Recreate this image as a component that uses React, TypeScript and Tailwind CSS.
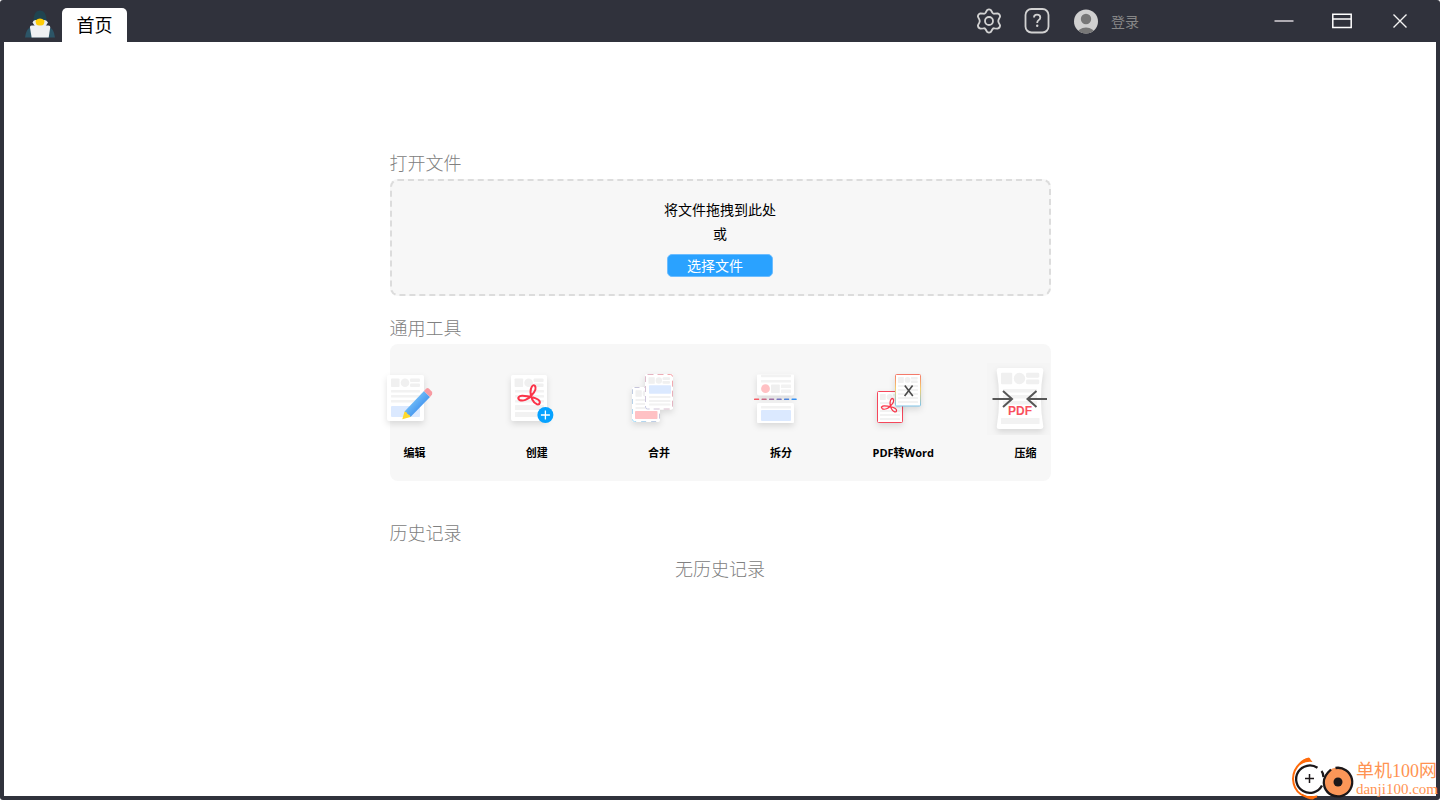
import type { ReactNode } from 'react';

function Acrobat({ transform, width = 2 }: { transform: string; width?: number }) {
  return (
    <path
      transform={transform}
      d="M5.800 -10.300 C8 -7.500 5 -3 2 0 C-1 3.500 -6 5.500 -9.500 4 C-12 2 -10 -0.500 -6.500 -0.300 C-1 0 5 1 9 3.500 C12 5.500 11 9 8 8.300 C4 7 1.500 1 1.500 -4 C1.500 -8 3.500 -12 5.800 -10.300 Z"
      fill="none"
      stroke="#fb3449"
      strokeWidth={width}
      strokeLinejoin="round"
    />
  );
}

// Grey placeholder blocks at the top of every sheet
function SheetHead({ x, y, scale = 1 }: { x: number; y: number; scale?: number }) {
  return (
    <g transform={`translate(${x} ${y}) scale(${scale})`} fill="#f0f0f0">
      <rect width="8.500" height="8.700" rx="0.800" />
      <circle cx="14" cy="4.300" r="4.300" />
      <rect x="19" width="10" height="3.700" rx="1" />
      <rect x="19" y="5" width="10" height="3.700" rx="1" />
    </g>
  );
}

function Lines({ x, width, ys, height = 2.5 }: { x: number; width: number; ys: number[]; height?: number }) {
  return (
    <>
      {ys.map((y) => (
        <rect key={y} x={x} y={y} width={width} height={height} rx="0.600" fill="#f2f2f2" />
      ))}
    </>
  );
}

function ToolIcon({ children }: { children: ReactNode }) {
  return (
    <svg viewBox="0 0 72 72" className="mr-2.5 size-[72px]" aria-hidden="true">
      {children}
    </svg>
  );
}

function EditIcon() {
  return (
    <ToolIcon>
      <defs>
        <linearGradient id="pencil" x1="0" y1="0" x2="1" y2="1">
          <stop offset="0.200" stopColor="#83ccfb" />
          <stop offset="0.800" stopColor="#3286ec" />
        </linearGradient>
      </defs>
      <rect x="13" y="12" width="37" height="46" rx="2" fill="#fff" className="drop-shadow-md" />
      <SheetHead x={17} y={15.4} />
      <Lines x={17} width={29} ys={[27, 32, 37]} />
      <rect x="17" y="43" width="29" height="11" rx="1" fill="#dbe9ff" />
      <path d="M30.500 48.500 L50 28 L56 34 L36.500 54 Z" fill="url(#pencil)" />
      <path d="M50 28 L52.300 25.500 Q53.500 24.500 54.800 25.500 L58 28.800 Q58.500 30 58 31.500 L56 34 Z" fill="#f79aa2" />
      <path d="M30.500 48.500 L28.300 56.200 L36.500 54 Q36 51.500 33.600 51.300 Q33 48.800 30.500 48.500 Z" fill="#ffd92e" />
    </ToolIcon>
  );
}

function CreateIcon() {
  return (
    <ToolIcon>
      <rect x="15" y="12" width="36" height="46" rx="2" fill="#fff" className="drop-shadow-md" />
      <SheetHead x={18.6} y={15.4} />
      <Lines x={19} width={29} ys={[27, 32, 37]} />
      <Lines x={19} width={29} ys={[42, 49]} height={5} />
      <Acrobat transform="translate(33 33)" />
      <circle cx="49.400" cy="52" r="8" fill="#06a2ff" />
      <path d="M49.400 47.500v9M44.900 52h9" stroke="#fff" strokeWidth="1.300" />
    </ToolIcon>
  );
}

function MergeIcon() {
  return (
    <ToolIcon>
      <defs>
        <linearGradient id="mergeBack" x1="0" y1="1" x2="1" y2="0">
          <stop offset="0" stopColor="#93d6f7" />
          <stop offset="1" stopColor="#d3a0b5" />
        </linearGradient>
        <linearGradient id="mergeFront" x1="0" y1="1" x2="1" y2="0">
          <stop offset="0" stopColor="#b9bedd" />
          <stop offset="1" stopColor="#f58e94" />
        </linearGradient>
      </defs>
      <g className="drop-shadow-md">
        <rect x="14" y="24" width="28" height="35" rx="2" fill="#fff" />
        <rect x="27" y="11" width="28" height="35.500" rx="2" fill="#fff" />
      </g>
      <rect x="14.500" y="24.500" width="27" height="34" rx="2" fill="none" stroke="url(#mergeBack)" strokeOpacity="0.800" strokeDasharray="5 5" />
      <SheetHead x={17.5} y={27.3} scale={0.74} />
      <Lines x={17.5} width={21} ys={[36, 40, 44]} height={2} />
      <rect x="17" y="48" width="22.500" height="8" rx="0.800" fill="#ffc1c4" />
      <rect x="27" y="11" width="28" height="35.500" rx="2" fill="#fff" />
      <rect x="27.500" y="11.500" width="27" height="34.500" rx="2" fill="none" stroke="url(#mergeFront)" strokeOpacity="0.800" strokeDasharray="6 4" />
      <SheetHead x={30.5} y={14.3} scale={0.74} />
      <rect x="31" y="22.300" width="22" height="8.500" rx="0.800" fill="#dbe9ff" />
      <Lines x={31} width={21.5} ys={[33, 37, 40.5]} height={2} />
    </ToolIcon>
  );
}

function SplitIcon() {
  const dashes = ['#f45b65', '#c96783', '#a06fa3', '#7676c0', '#4f86dc', '#3290f4'];
  return (
    <ToolIcon>
      <g className="drop-shadow-md" fill="#fff">
        <path d="M17 12.500 q0 -1 1 -1 h35 q1 0 1 1 v18 q0 2 -2 2 h-33 q-2 0 -2 -2 Z" />
        <path d="M17 42 q0 -2 2 -2 h33 q2 0 2 2 v17 q0 1 -1 1 h-35 q-1 0 -1 -1 Z" />
      </g>
      <Lines x={21} width={30} ys={[11.7, 17, 43]} />
      <circle cx="25.500" cy="25.700" r="4.400" fill="#ffc1c4" />
      <rect x="31" y="21.500" width="8.800" height="8.500" rx="0.800" fill="#efefef" />
      <Lines x={41} width={10} ys={[21.5, 26.5]} height={3.6} />
      <rect x="21" y="47" width="30" height="11" rx="1" fill="#dbe9ff" />
      {dashes.map((color, i) => (
        <rect key={color} x={14 + i * 7.5} y="35.500" width="5.200" height="1.600" rx="0.600" fill={color} />
      ))}
    </ToolIcon>
  );
}

function WordIcon() {
  return (
    <ToolIcon>
      <defs>
        <linearGradient id="wordEdge" x1="0" y1="0" x2="0" y2="1">
          <stop offset="0" stopColor="#f47a6a" />
          <stop offset="0.450" stopColor="#f5cf6e" />
          <stop offset="1" stopColor="#7cc3ea" />
        </linearGradient>
      </defs>
      <rect x="15.500" y="28.500" width="25" height="31" rx="1" fill="#fff" stroke="#f5475c" className="drop-shadow-md" />
      <SheetHead x={18} y={31} scale={0.68} />
      <Lines x={18} width={20} ys={[39, 43, 47, 51, 55]} height={2} />
      <Acrobat transform="translate(27 43) scale(0.700)" width={1.8} />
      <rect x="33.500" y="11.500" width="25" height="31.500" rx="1" fill="#fff" stroke="url(#wordEdge)" className="drop-shadow-md" />
      <SheetHead x={36} y={14} scale={0.68} />
      <Lines x={36} width={20} ys={[22, 26, 30, 34, 38]} height={2} />
      <path d="M42.800 22.500 L50.800 33 M50.600 22.500 L42.600 33" stroke="#4c4c4c" strokeWidth="1.600" />
    </ToolIcon>
  );
}

function CompressIcon() {
  return (
    <ToolIcon>
      <rect x="3" width="63" height="72" fill="#f5f5f5" />
      <path
        d="M15 5 h42 q2.500 0 2.300 2.500 Q54.500 36 59.300 63.500 q0.200 2.500 -2.300 2.500 h-42 q-2.500 0 -2.200 -2.500 Q17.500 36 12.700 7.500 q-0.200 -2.500 2.300 -2.500 Z"
        fill="#fff"
        className="drop-shadow-md"
      />
      <SheetHead x={17} y={9.8} scale={1.32} />
      <Lines x={19} width={34} ys={[26, 32, 38]} height={3.5} />
      <Lines x={17} width={38.5} ys={[55]} height={6} />
      <path d="M8.500 36 H27.500 M19 28 L28 36 L19 44 M63 36 H44 M52.500 28 L43.500 36 L52.500 44" fill="none" stroke="#565656" strokeWidth="2" />
      <text x="36" y="52" textAnchor="middle" fontFamily="Liberation Sans, sans-serif" fontSize="12" fill="#f9505d">
        PDF
      </text>
    </ToolIcon>
  );
}

const tools = [
  { label: '编辑', icon: <EditIcon /> },
  { label: '创建', icon: <CreateIcon /> },
  { label: '合并', icon: <MergeIcon /> },
  { label: '拆分', icon: <SplitIcon /> },
  { label: 'PDF转Word', icon: <WordIcon /> },
  { label: '压缩', icon: <CompressIcon /> },
];

function AppLogo() {
  return (
    <svg viewBox="0 0 30 28" className="mr-[7px] mb-1 ml-[25px] h-7 w-[30px] shrink-0" aria-hidden="true">
      <path d="M0 27.500 Q1 18 8 15.500 L22 15.500 Q29 18 30 27.500 Z" fill="#2c5567" />
      <path d="M8.500 12 Q8 0.500 15 0.500 Q22 0.500 21.500 12 L19 15 H11 Z" fill="#1f4450" />
      <path d="M7.500 12.500 Q8.500 9.500 11 10 L19 10 Q21.500 9.500 23 12.500 L20 17 H10.500 Z" fill="#e9edf0" />
      <path d="M10.500 10.500 Q15 6.500 19.500 10.500 Q19.500 16 15 16 Q10.500 16 10.500 10.500 Z" fill="#ffcd05" />
      <path d="M6.500 15.500 H23.500 Q25.500 15.500 25.200 17.500 L23.700 27.500 H6.600 L5 17.500 Q4.700 15.500 6.500 15.500 Z" fill="#eef0f2" />
    </svg>
  );
}

function TitleBar() {
  return (
    <header className="flex h-[42px] items-end justify-between">
      <div className="flex items-end">
        <AppLogo />
        <nav>
          <a href="#home" className="flex h-[34px] w-[65px] items-center justify-center rounded-t-[5px] bg-white text-lg text-black">
            首页
          </a>
        </nav>
      </div>
      <div className="flex h-full items-center pr-[11px]">
        <div className="mr-[116px] flex items-center gap-[22px]">
          <button aria-label="设置">
            <svg viewBox="0 0 26 26" className="size-[26px]" fill="none" stroke="#d2d2d2" strokeWidth="1.800" strokeLinejoin="round">
              <path d="M11 2.200 Q13 0.500 15 2.200 L16.400 4.800 Q17.200 5.900 18.500 5.700 L21.500 5.400 Q24 6 24.100 8.600 L22.600 11.600 Q22 13 22.600 14.400 L24.100 17.400 Q24 20 21.500 20.600 L18.500 20.300 Q17.200 20.100 16.400 21.200 L15 23.800 Q13 25.500 11 23.800 L9.600 21.200 Q8.800 20.100 7.500 20.300 L4.500 20.600 Q2 20 1.900 17.400 L3.400 14.400 Q4 13 3.400 11.600 L1.900 8.600 Q2 6 4.500 5.400 L7.500 5.700 Q8.800 5.900 9.600 4.800 Z" />
              <circle cx="13" cy="13" r="4" />
            </svg>
          </button>
          <button aria-label="帮助">
            <svg viewBox="0 0 26 26" className="size-[26px]" fill="none" stroke="#d2d2d2" strokeWidth="1.800">
              <rect x="1.500" y="1" width="23" height="23.500" rx="6" />
              <path d="M10 9.500 Q10 6.700 13 6.700 Q16.300 6.700 16.300 9.500 Q16.300 11.200 14.500 12.200 Q13.200 13 13.200 15" />
              <circle cx="13.200" cy="17.700" r="1.200" fill="#d2d2d2" stroke="none" />
            </svg>
          </button>
          <button className="flex items-center gap-[11px] font-[Noto_Sans_CJK_SC,sans-serif] text-sm text-[#878787]">
            <svg viewBox="0 0 28 28" className="size-7" aria-hidden="true">
              <clipPath id="avatar">
                <circle cx="14" cy="14.500" r="12" />
              </clipPath>
              <g clipPath="url(#avatar)">
                <rect width="28" height="28" fill="#d0d0d0" />
                <circle cx="14" cy="12" r="5.200" fill="#777" />
                <ellipse cx="14" cy="27" rx="9" ry="6.500" fill="#777" />
              </g>
            </svg>
            登录
          </button>
        </div>
        <button aria-label="最小化" className="flex w-[58px] justify-center">
          <svg viewBox="0 0 20 16" className="h-4 w-5" stroke="#d8d4da" strokeWidth="1.500">
            <path d="M0.500 8 H19.500" />
          </svg>
        </button>
        <button aria-label="最大化" className="flex w-[58px] justify-center">
          <svg viewBox="0 0 20 16" className="h-4 w-5" fill="none" stroke="#fff" strokeWidth="1.500">
            <path d="M0.800 1.200 H19.200 V14.500 H0.800 Z M0.800 6 H19.200" />
          </svg>
        </button>
        <button aria-label="关闭" className="flex w-[58px] justify-center">
          <svg viewBox="0 0 14 14" className="size-3.5" stroke="#f4f4f4" strokeWidth="1.400">
            <path d="M0.500 0.500 L13.500 13.500 M13.500 0.500 L0.500 13.500" />
          </svg>
        </button>
      </div>
    </header>
  );
}

function SiteMark() {
  return (
    <div className="absolute right-0 bottom-0 flex items-center text-[#ff9352]">
      <svg viewBox="0 0 64 43" className="h-[43px] w-16" fill="none" aria-hidden="true">
        <path d="M19 2.500 Q14 1.500 9 6.500 Q2 13 2 22 Q2.500 32 9.500 37 Q17 42 26 39.500" stroke="#ff6a0a" strokeWidth="2" />
        <path d="M9 6.500 Q14 0.500 18 0.500 L21.500 5 Q15 4 9 8 Z M10 37 Q18 41 27 38.500 L22 42.500 Q16 42.500 10 37 Z" fill="#ff6a0a" />
        <circle cx="47" cy="25" r="14.500" fill="#fb9658" />
        <path d="M26.500 10.800 A13.700 13.700 0 1 0 31 28.500" stroke="#1c1719" strokeWidth="2.300" />
        <path d="M44.500 11 A14.300 14.300 0 1 1 33.500 30 Q31 22 37 15.500 L40 12.500" stroke="#1c1719" strokeWidth="2.300" />
        <path d="M30.500 14 Q32 15.500 32.500 20" stroke="#1c1719" strokeWidth="2.300" />
        <path d="M18.500 17 V26 M14 21.500 H23" stroke="#1c1719" strokeWidth="1.500" />
        <circle cx="47" cy="25" r="4.500" fill="#1c1719" />
      </svg>
      <div className="pr-0.5 pl-px font-[Liberation_Serif,Noto_Sans_CJK_SC,serif]">
        <p className="text-lg leading-5">单机100网</p>
        <p className="text-[15px] leading-4">danji100.com</p>
      </div>
    </div>
  );
}

function SectionTitle({ children }: { children: ReactNode }) {
  return <h2 className="text-lg leading-8 font-light text-[#808080]">{children}</h2>;
}

export default function App() {
  return (
    <div className="relative flex min-h-screen flex-col overflow-hidden rounded-[3px] bg-[#30323c] font-[Open_Sans,Noto_Sans_CJK_SC,sans-serif]">
      <TitleBar />
      <main className="mx-1 mb-1 flex-1 bg-white pt-[105px]">
        <div className="mx-auto w-full max-w-[661px]">
          <section>
            <SectionTitle>打开文件</SectionTitle>
            <div className="flex flex-col items-center rounded-lg border-2 border-dashed border-[#dcdcdc] bg-[#f7f7f7] pt-[17px] pb-[17px] text-sm leading-6 text-black">
              <p>将文件拖拽到此处</p>
              <p>或</p>
              <button className="mt-2 flex h-[23px] w-[106px] items-center rounded-[5px] border border-[#6dbdff] bg-[#2aa2ff] pl-[19px] text-white">
                选择文件
              </button>
            </div>
          </section>

          <section className="mt-4">
            <SectionTitle>通用工具</SectionTitle>
            <div className="rounded-lg bg-[#f7f7f7] pt-[19px] pb-[18px]">
              {/* Outer columns hang over the panel so their icons sit at its edges */}
              <div className="-mx-9 grid grid-cols-6">
                {tools.map((tool) => (
                  <button key={tool.label} className="flex flex-col items-center gap-2 text-[11px] leading-5 font-bold text-black">
                    {tool.icon}
                    {tool.label}
                  </button>
                ))}
              </div>
            </div>
          </section>

          <section className="mt-9">
            <SectionTitle>历史记录</SectionTitle>
            <p className="mt-1 text-center text-lg leading-8 font-light text-[#808080]">无历史记录</p>
          </section>
        </div>
      </main>
      <SiteMark />
    </div>
  );
}
